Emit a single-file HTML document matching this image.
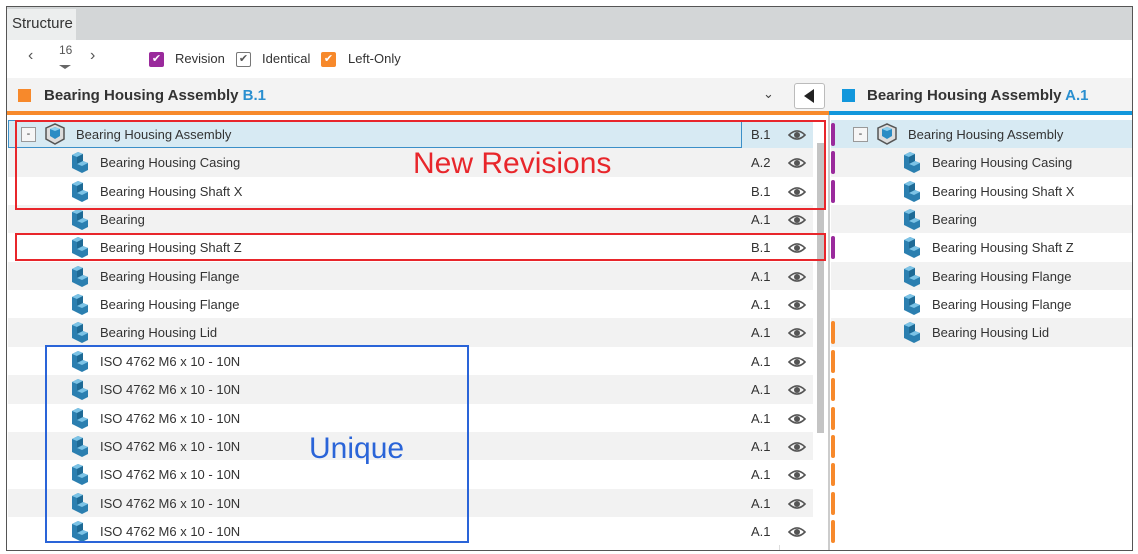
<!DOCTYPE html><html><head><style>
*{box-sizing:border-box;margin:0;padding:0}
body{width:1138px;height:554px;background:#fff;font-family:"Liberation Sans",sans-serif;position:relative;overflow:hidden;color:#333}
.a{position:absolute}
.row{position:absolute;height:28.4px;font-size:13px;line-height:29px}
.ic{position:absolute;width:22px;height:22px;top:3px}
</style></head><body>
<div class="a" style="left:6px;top:6px;width:1127px;height:545px;border:1px solid #555"></div>
<div class="a" style="left:7px;top:7px;width:1125px;height:33px;background:#d3d6d7"></div>
<div class="a" style="left:7px;top:9px;width:69px;height:31px;background:#eceeee;font-size:15px;line-height:30px;padding-left:5px">Structure</div>
<div class="a" style="left:28px;top:47px;font-size:16px;color:#555">‹</div>
<div class="a" style="left:59px;top:43px;font-size:12px;color:#555">16</div>
<div class="a" style="left:59px;top:65px;width:0;height:0;border-left:6px solid transparent;border-right:6px solid transparent;border-top:4px solid #666"></div>
<div class="a" style="left:90px;top:47px;font-size:16px;color:#555">›</div>
<div class="a" style="left:149px;top:52px;width:15px;height:15px;background:#9a2a9c;border-radius:2px;color:#fff;font-size:11px;text-align:center;line-height:15px">✔</div>
<div class="a" style="left:175px;top:51px;font-size:13px">Revision</div>
<div class="a" style="left:236px;top:52px;width:15px;height:15px;border:1px solid #777;border-radius:2px;color:#555;font-size:11px;text-align:center;line-height:13px">✔</div>
<div class="a" style="left:262px;top:51px;font-size:13px">Identical</div>
<div class="a" style="left:321px;top:52px;width:15px;height:15px;background:#f7892b;border-radius:2px;color:#fff;font-size:11px;text-align:center;line-height:15px">✔</div>
<div class="a" style="left:348px;top:51px;font-size:13px">Left-Only</div>
<div class="a" style="left:7px;top:78px;width:1125px;height:33px;background:#f3f3f3"></div>
<div class="a" style="left:18px;top:89px;width:13px;height:13px;background:#f7892b"></div>
<div class="a" style="left:44px;top:87px;font-size:15px;font-weight:bold">Bearing Housing Assembly <span style="color:#2a8fd0">B.1</span></div>
<div class="a" style="left:763px;top:86px;font-size:13px;color:#444">⌄</div>
<div class="a" style="left:794px;top:83px;width:31px;height:26px;border:1px solid #bbb;border-radius:3px;background:#fff"></div>
<div class="a" style="left:804px;top:89px;width:0;height:0;border-top:7px solid transparent;border-bottom:7px solid transparent;border-right:10px solid #222"></div>
<div class="a" style="left:842px;top:89px;width:13px;height:13px;background:#1297dc"></div>
<div class="a" style="left:867px;top:87px;font-size:15px;font-weight:bold">Bearing Housing Assembly <span style="color:#2a8fd0">A.1</span></div>
<div class="a" style="left:7px;top:111px;width:822px;height:4px;background:#f7892b"></div>
<div class="a" style="left:829px;top:111px;width:303px;height:4px;background:#1297dc"></div>
<div class="a" style="left:828px;top:115px;width:2px;height:435px;background:#ccc"></div>
<div class="a" style="left:779px;top:120px;width:1px;height:430px;background:#ddd"></div>
<div class="a" style="left:817px;top:143px;width:7px;height:290px;background:#c4c4c4"></div>
<div id="rows"></div>
<div class="a" style="left:15px;top:120px;width:811px;height:90px;border:2px solid #e8262b"></div>
<div class="a" style="left:15px;top:233px;width:811px;height:28px;border:2px solid #e8262b"></div>
<div class="a" style="left:45px;top:345px;width:424px;height:198px;border:2px solid #2a64d8"></div>
<div class="a" style="left:413px;top:147px;font-size:30px;color:#e8262b">New Revisions</div>
<div class="a" style="left:309px;top:432px;font-size:30px;color:#2a64d8">Unique</div>
<script>
const cube='<svg viewBox="0 0 22 22" width="22" height="22"><path d="M3 4 L9 1 L14 3 L14 10 L19 12 L19 19 L13 22 L3 17 Z" fill="#2b7fb0"/><path d="M3 4 L9 1 L14 3 L8 6Z" fill="#7cc3e6"/><path d="M8 6 L14 3 L14 10 L8 13Z" fill="#1e6a95"/><path d="M8 13 L14 10 L19 12 L13 15Z" fill="#7cc3e6"/></svg>';
const asm='<svg viewBox="0 0 22 22" width="22" height="22"><path d="M2 5 L11 1 L20 5 L20 16 L11 21 L2 16Z" fill="#ddd" stroke="#555" stroke-width="1.5"/><path d="M6 6 L11 4 L16 6 L16 13 L11 16 L6 13Z" fill="#2b8cc4"/><path d="M6 6 L11 4 L16 6 L11 8Z" fill="#8fd0ee"/></svg>';
const eye='<svg viewBox="0 0 18 12" width="18" height="12"><path d="M1 6 Q9 -2 17 6 Q9 14 1 6Z" fill="none" stroke="#555" stroke-width="1.6"/><circle cx="9" cy="6" r="3" fill="#555"/></svg>';
const L=[["Bearing Housing Assembly","B.1"],["Bearing Housing Casing","A.2"],["Bearing Housing Shaft X","B.1"],["Bearing","A.1"],["Bearing Housing Shaft Z","B.1"],["Bearing Housing Flange","A.1"],["Bearing Housing Flange","A.1"],["Bearing Housing Lid","A.1"]];
for(let i=0;i<7;i++)L.push(["ISO 4762 M6 x 10 - 10N","A.1"]);
let h='';
for(let i=0;i<15;i++){const y=120+i*28.35;const bg=i==0?'#d7eaf3':(i%2?'#f2f2f2':'#fff');
h+=`<div class="row" style="left:8px;top:${y}px;width:805px;background:${bg}"></div>`;
if(i<8)h+=`<div class="row" style="left:831px;top:${y}px;width:301px;background:${bg}"></div>`;
if(i==0){h+=`<div class="a" style="left:8px;top:${y}px;width:734px;height:28px;border:1px solid #3b8fc8"></div>`;
h+=`<div class="a" style="left:21px;top:${y+7}px;width:15px;height:15px;border:1px solid #999;background:#f6f6f6;font-size:11px;text-align:center;line-height:12px">-</div><div class="ic" style="left:44px;top:${y+3}px">${asm}</div><div class="row" style="left:76px;top:${y}px">${L[i][0]}</div>`;
h+=`<div class="a" style="left:853px;top:${y+7}px;width:15px;height:15px;border:1px solid #999;background:#f6f6f6;font-size:11px;text-align:center;line-height:12px">-</div><div class="ic" style="left:876px;top:${y+3}px">${asm}</div><div class="row" style="left:908px;top:${y}px">${L[i][0]}</div>`;
}else{h+=`<div class="ic" style="left:69px;top:${y+3}px">${cube}</div><div class="row" style="left:100px;top:${y}px">${L[i][0]}</div>`;
if(i<8)h+=`<div class="ic" style="left:901px;top:${y+3}px">${cube}</div><div class="row" style="left:932px;top:${y}px">${L[i][0]}</div>`;}
h+=`<div class="row" style="left:751px;top:${y}px">${L[i][1]}</div><div class="a" style="left:788px;top:${y+8}px">${eye}</div>`;
const c=[0,1,2,4].includes(i)?'#9a2a9c':(i>=7?'#f7892b':null);
if(c)h+=`<div class="a" style="left:831px;top:${y+3}px;width:4px;height:23px;border-radius:2px;background:${c}"></div>`;}
document.getElementById('rows').innerHTML=h;
</script>
</body></html>
